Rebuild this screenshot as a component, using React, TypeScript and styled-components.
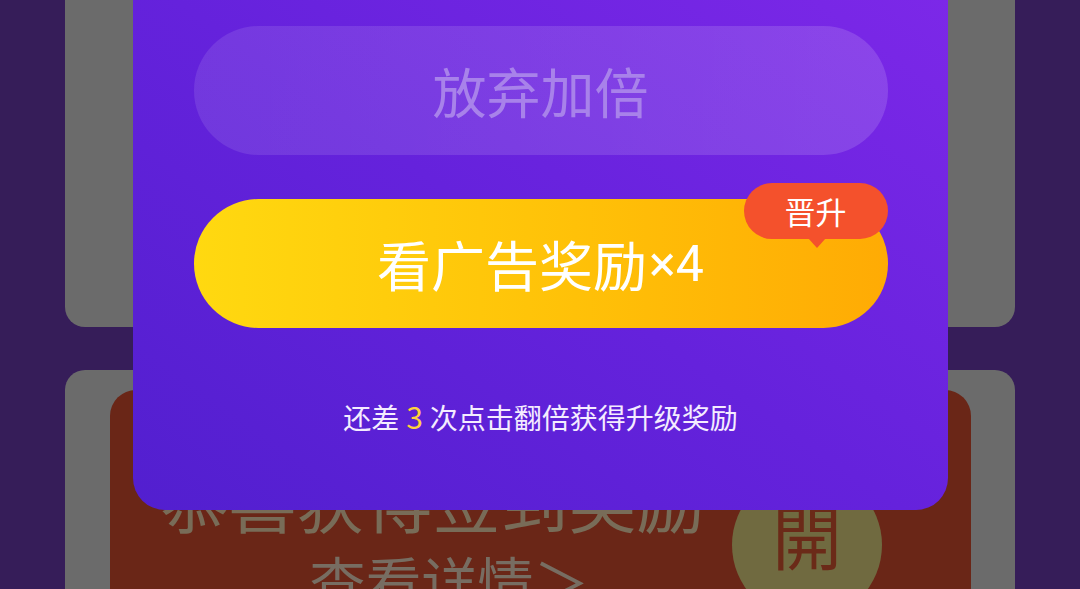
import * as React from 'react';
import styled, { createGlobalStyle } from 'styled-components';

const GlobalStyle = createGlobalStyle`
    html, body {
        margin: 0;
        padding: 0;
        background: #361d59;
    }
    * {
        box-sizing: border-box;
    }
`;

const FONT = `"Noto Sans CJK SC", "Noto Sans", sans-serif`;

const Page = styled.div`
    position: relative;
    width: 1080px;
    height: 589px;
    overflow: hidden;
    background: #361d59;
    font-family: ${FONT};
`;

const CardList = styled.div`
    display: flex;
    flex-direction: column;
    gap: 43px;
    padding: 0 65px;
    margin-top: -200px;
`;

const Card = styled.div<{ height: number }>`
    height: ${(props) => props.height}px;
    border-radius: 20px;
    background: #6b6b6b;
    padding: 20px 44px 0 45px;
`;

const RewardPanel = styled.div`
    display: flex;
    align-items: flex-start;
    height: 100%;
    padding: 75px 0 0 50px;
    border-radius: 26px 26px 0 0;
    background: #6a2617;
`;

const RewardText = styled.div`
    display: flex;
    flex-direction: column;
    align-items: center;
    width: 545px;
`;

const RewardTitle = styled.div`
    font-size: 68px;
    line-height: 68px;
    color: #786c58;
    white-space: nowrap;
`;

const RewardLink = styled.div`
    margin: 19px 0 0 34px;
    font-size: 56px;
    line-height: 56px;
    color: #776d62;
    white-space: nowrap;
`;

const Coin = styled.div`
    display: flex;
    align-items: center;
    justify-content: center;
    width: 150px;
    height: 150px;
    margin: 5px 0 0 27px;
    padding-bottom: 22px;
    border-radius: 50%;
    background: #706a40;
    font-size: 70px;
    color: #6b2a18;
`;

const Modal = styled.div`
    position: absolute;
    top: 0;
    left: 133px;
    width: 815px;
    height: 510px;
    border-radius: 0 0 32px 32px;
    background: linear-gradient(35deg, #521fcf 0%, #6522dc 50%, #7c28e8 100%);
    display: flex;
    flex-direction: column;
    align-items: center;
    padding-top: 26px;
`;

const ButtonStack = styled.div`
    display: flex;
    flex-direction: column;
    gap: 44px;
    width: 694px;
`;

const PillButton = styled.button<{ variant: 'ghost' | 'gold' }>`
    position: relative;
    display: flex;
    align-items: center;
    justify-content: center;
    height: 129px;
    border: none;
    border-radius: 65px;
    font-family: ${FONT};
    font-size: 54px;
    padding: 0;
    cursor: pointer;

    ${(props) =>
        props.variant === 'ghost' &&
        `
        background: linear-gradient(90deg, rgba(255, 255, 255, 0.1), rgba(255, 255, 255, 0.14));
        color: #a882ea;
    `}

    ${(props) =>
        props.variant === 'gold' &&
        `
        background: linear-gradient(90deg, #ffd910 0%, #ffc108 55%, #ffab04 100%);
        color: #ffffff;
    `}
`;

const Multiplier = styled.span`
    font-family: "Roboto", "Noto Sans", sans-serif;
    font-size: 50px;
    margin-left: 2px;
`;

const Badge = styled.div`
    position: absolute;
    top: -16px;
    right: 0;
    width: 144px;
    height: 56px;
    border-radius: 28px;
    background: #f4512c;
    color: #ffffff;
    font-size: 31px;
    line-height: 56px;
    text-align: center;

    &::after {
        content: '';
        position: absolute;
        left: 64px;
        bottom: -9px;
        border-left: 9px solid transparent;
        border-right: 9px solid transparent;
        border-top: 10px solid #f4512c;
    }
`;

const Hint = styled.div`
    margin-top: 70px;
    font-size: 28px;
    line-height: 36px;
    color: #f4ecff;
    white-space: nowrap;
`;

const Count = styled.span`
    color: #ffd23c;
    padding: 0 7px;
    font-size: 30px;
`;

const App = () => (
    <Page>
        <GlobalStyle />
        <CardList>
            <Card height={527} />
            <Card height={420}>
                <RewardPanel>
                    <RewardText>
                        <RewardTitle>恭喜获得签到奖励</RewardTitle>
                        <RewardLink>查看详情＞</RewardLink>
                    </RewardText>
                    <Coin>開</Coin>
                </RewardPanel>
            </Card>
        </CardList>

        <Modal>
            <ButtonStack>
                <PillButton variant="ghost">放弃加倍</PillButton>
                <PillButton variant="gold">
                    看广告奖励<Multiplier>×4</Multiplier>
                    <Badge>晋升</Badge>
                </PillButton>
            </ButtonStack>
            <Hint>
                还差<Count>3</Count>次点击翻倍获得升级奖励
            </Hint>
        </Modal>
    </Page>
);

export default App;
